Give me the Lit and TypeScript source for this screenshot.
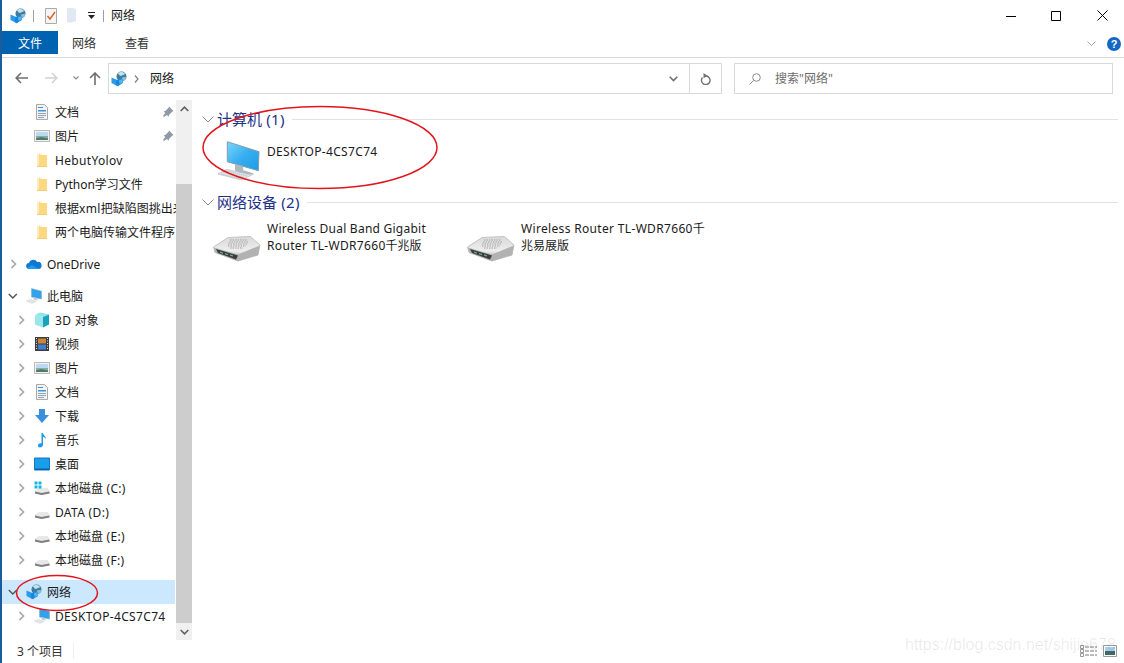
import { LitElement, html, css, svg } from "lit";
import { customElement } from "lit/decorators.js";

/* Wraps runs of Latin text so only they get the slightly wider tracking of the reference's font. */
const txt = (s: string) =>
  s.split(/([\u2E80-\u9FFF]+)/).map((p) => (/^[\u2E80-\u9FFF]+$/.test(p) || !p ? p : html`<span class="lat">${p}</span>`));

const netIcon = (s = 16) => html`<svg width=${s} height=${s} viewBox="0 0 16 16">
  <circle cx="10.500" cy="5.500" r="5" fill="#3c7d9f"/>
  <path d="M7 2.500c1.500-2 5.500-2 7 .5-1 .5-1.500 1.500-3 1.200-1 1.500-2.500.5-4-1.700z" fill="#c4e0ec"/>
  <path d="M11 6.500c1.500-.5 3-.5 4.300-.5-.3 2-1.800 3.700-3.800 4.200z" fill="#8fbdd2"/>
  <path d="M.5 6.500l7 3v5.500l-1 .3-6-3.300z" fill="#2a9bea"/>
  <path d="M5 9.500l5.500-2.200 1 1 .5 3.700-5 3-2-1z" fill="#1b86d8"/>
  <path d="M8 9l3.500-.8.500 3.300-3.500 1.500z" fill="#53b4f2"/>
</svg>`;

const docIcon = () => html`<svg width="16" height="16" viewBox="0 0 16 16">
  <path d="M2.500.5h8l3 3v12h-11z" fill="#f3f3f3" stroke="#a9a9a9"/>
  <path d="M4 3h5v1H4zM4 6h8v1.500H4z" fill="#3e95d8"/><path d="M4 9.500h8M4 11.500h8M4 13.500h6" stroke="#8fa3b4"/>
</svg>`;

const picIcon = () => html`<svg width="16" height="16" viewBox="0 0 16 16">
  <path d="M.5 2.500h15v11H.5z" fill="#f2f2f2" stroke="#b9b9b9"/>
  <path d="M2 4h12v4H2z" fill="#bcd8f2"/><path d="M2 8h12v4H2z" fill="#86ad9f"/><path d="M2 10.500l5-1.500 7 1.500V12H2z" fill="#54776c"/>
</svg>`;

const folderIcon = () => html`<svg width="16" height="16" viewBox="0 0 16 16">
  <path d="M3 2.500h2v11.500H3z" fill="#fdeeb8"/><path d="M5 1.500l3 1.500h5v11.500H5z" fill="#fcd980"/><path d="M3 14h10v1H3z" fill="#f3cf7a"/>
</svg>`;

const pinIcon = () => html`<svg width="12" height="12" viewBox="0 0 12 12">
  <path d="M7 .5l4.500 4.500-1.300.7-3 3-.7 2-1.600-1.600L2 11 1 10l2.300-2.900L1.600 5.500l2-.7 3-3z" fill="#8e9aa5"/>
</svg>`;

const cloudIcon = () => html`<svg width="16" height="16" viewBox="0 0 16 16">
  <path d="M3.500 13a3 3 0 01-.6-6A4.500 4.500 0 0111.200 6a3.500 3.500 0 011.500 7z" fill="#0f78d4"/>
  <path d="M3.500 13a3 3 0 01-2-1.400L6 9l6 3.500 2-1.200a3 3 0 01-1.300 1.700z" fill="#1a9fe8"/>
</svg>`;

const pcIcon = () => html`<svg width="16" height="16" viewBox="0 0 16 16">
  <path d="M5.500 .5l10 2.700v7.800l-10-2z" fill="#31a3ec" stroke="#7fa6c0" stroke-width=".5"/>
  <path d="M8 9.300l3 .6v1.500l2.500.8-4.500 0-1.500-1z" fill="#c3ccd2"/>
  <path d="M0 13l4.500-1.800 6 2.300-4.500 2z" fill="#e2e5e8" stroke="#c4cace" stroke-width=".3"/>
</svg>`;

const cubeIcon = () => html`<svg width="16" height="16" viewBox="0 0 16 16">
  <path d="M6 .5l9 2-6 2.500L1 3z" fill="#8fe3ea"/><path d="M1 3l8 2v10.500l-8-3z" fill="#9be6ec"/><path d="M9 5l6-2.500v10l-6 3z" fill="#1aa3bd"/>
</svg>`;

const videoIcon = () => html`<svg width="16" height="16" viewBox="0 0 16 16">
  <path d="M1 1h14v14H1z" fill="#3d3d3d"/><path d="M4 2.500h8v5H4z" fill="#c9863f"/><path d="M4 8.500h8v5H4z" fill="#3c7fd0"/>
  <path d="M2 2.500h1M2 5h1M2 7.500h1M2 10h1M2 12.500h1M13 2.500h1M13 5h1M13 7.500h1M13 10h1M13 12.500h1" stroke="#ddd"/>
</svg>`;

const dlIcon = () => html`<svg width="16" height="16" viewBox="0 0 16 16">
  <path d="M5 1h6v6h4l-7 8-7-8h4z" fill="#3a8fdc"/>
</svg>`;

const musicIcon = () => html`<svg width="16" height="16" viewBox="0 0 16 16">
  <path d="M7.500 1h1.500c.3 2.500 3 3 3 6-1-1.500-2-2-3-2v7.500c0 1.800-1.500 3-3.200 3C4.500 15.500 4 14.500 4 13.500 4 12 5.800 11 7.500 11.500z" fill="#1e9be8"/>
</svg>`;

const deskIcon = () => html`<svg width="16" height="16" viewBox="0 0 16 16">
  <path d="M.5 2h15v12H.5z" fill="#199fe8" stroke="#1674c0"/><path d="M1 12.500h14V14H1z" fill="#0c5fa8"/>
</svg>`;

const driveIcon = (win = false) => html`<svg width="16" height="16" viewBox="0 0 16 16">
  <path d="M1 10.500l4-2.500h8.500l2 2.500v3l-8 1.500-6.500-1.500z" fill="#e8e8e8"/>
  <path d="M1 11.500l6.500 1.500 8-1.500v2l-8 1.500-6.500-1.500z" fill="#7d7d7d"/>
  ${win ? svg`<path d="M.5 1.500h3v3h-3zM4.500 1.500h3v3h-3zM.5 5.500h3v3h-3zM4.500 5.500h3v3h-3z" fill="#14b4e8"/>` : ""}
</svg>`;

const bigPc = () => html`<svg class="bigicon" width="42" height="40" viewBox="0 0 42 40">
  <defs><linearGradient id="scr" x1="0" y1="0" x2="1" y2="1"><stop offset="0" stop-color="#7dd6fb"/><stop offset=".5" stop-color="#38aef0"/><stop offset="1" stop-color="#1b9ce6"/></linearGradient></defs>
  <path d="M9.300 .7L41 10.700l-.7 19L9.300 20.700z" fill="url(#scr)" stroke="#7f9db0"/>
  <path d="M17 23l8 2.300.3 4 10 3v1.500l-12-1.300-6.300-3z" fill="#aeb8bf"/>
  <path d="M-.3 33l9-4.700 25 5.700-10 5z" fill="#dfe3e6" stroke="#b4babf" stroke-width=".6"/>
  <path d="M5 31l21 5.500M8 30l21 5M3 33l19 5" stroke="#b5bbc0" stroke-width=".8" stroke-dasharray="1.500 .7"/>
</svg>`;

const router = () => html`<svg class="bigicon rt-ic" width="48" height="26" viewBox="0 0 48 26">
  <defs>
    <linearGradient id="rt" x1="0" y1="0" x2="0" y2="1"><stop offset="0" stop-color="#d9d9d9"/><stop offset=".6" stop-color="#eeeeee"/><stop offset="1" stop-color="#8f8f8f"/></linearGradient>
  </defs>
  <path d="M15 1.500L37.500.500 47 9l-2 10-20 6L2 16.500.5 11z" fill="url(#rt)" stroke="#c4c4c4" stroke-linejoin="round"/>
  <path d="M.8 11.500L25 18.500 46.800 9.500 45 19 25 25 2 16.500z" fill="#b2b2b2"/>
  <path d="M17 4h17M16 6h19M15 8h20M15 10h18M17 12h13" stroke="#a2a2a2" stroke-width="1.200" stroke-dasharray="1.500 1"/>
  <path d="M3 13l22 6.500-2 4L5 17z" fill="#3c3c3c"/>
  <path d="M7 15.500l3 .9v1.300l-3-.9zM12 17l3 .9v1.300l-3-.9zM17 18.400l3 .9v1.300l-3-.9z" fill="#6fae92"/>
</svg>`;

const chev = (dir: "r" | "d") =>
  dir === "r"
    ? html`<svg width="8" height="10" viewBox="0 0 8 10" fill="none" stroke="#a6a6a6" stroke-width="1.600"><path d="M1.500 1l4 4-4 4"/></svg>`
    : html`<svg class="down" width="10" height="7" viewBox="0 0 10 7" fill="none" stroke="#555" stroke-width="1.500"><path d="M.800 1l4 4 4-4"/></svg>`;

const groupChev = () =>
  html`<svg width="12" height="7" viewBox="0 0 12 7" fill="none" stroke="#8a8a8a"><path d="M.500.500L6 6 11.500.500"/></svg>`;

type Row = { label: string; icon: unknown; level: 0 | 1; arrow?: "r" | "d"; pin?: boolean; sel?: boolean; gap?: boolean; plain?: boolean };

const rows: Row[] = [
  { label: "文档", icon: docIcon(), level: 1, pin: true },
  { label: "图片", icon: picIcon(), level: 1, pin: true },
  { label: "HebutYolov", icon: folderIcon(), level: 1 },
  { label: "Python学习文件", icon: folderIcon(), level: 1, plain: true },
  { label: "根据xml把缺陷图挑出来", icon: folderIcon(), level: 1 },
  { label: "两个电脑传输文件程序", icon: folderIcon(), level: 1 },
  { label: "OneDrive", icon: cloudIcon(), level: 0, arrow: "r", gap: true, plain: true },
  { label: "此电脑", icon: pcIcon(), level: 0, arrow: "d", gap: true },
  { label: "3D 对象", icon: cubeIcon(), level: 1, arrow: "r" },
  { label: "视频", icon: videoIcon(), level: 1, arrow: "r" },
  { label: "图片", icon: picIcon(), level: 1, arrow: "r" },
  { label: "文档", icon: docIcon(), level: 1, arrow: "r" },
  { label: "下载", icon: dlIcon(), level: 1, arrow: "r" },
  { label: "音乐", icon: musicIcon(), level: 1, arrow: "r" },
  { label: "桌面", icon: deskIcon(), level: 1, arrow: "r" },
  { label: "本地磁盘 (C:)", icon: driveIcon(true), level: 1, arrow: "r" },
  { label: "DATA (D:)", icon: driveIcon(), level: 1, arrow: "r" },
  { label: "本地磁盘 (E:)", icon: driveIcon(), level: 1, arrow: "r" },
  { label: "本地磁盘 (F:)", icon: driveIcon(), level: 1, arrow: "r" },
  { label: "网络", icon: netIcon(), level: 0, arrow: "d", sel: true, gap: true },
  { label: "DESKTOP-4CS7C74", icon: pcIcon(), level: 1, arrow: "r" },
];

@customElement("app-root")
export class AppRoot extends LitElement {
  static styles = css`
    :host { display: block; position: relative; width: 1124px; height: 663px; overflow: hidden; background: #fff; color: #1a1a1a;
      font-family: "Noto Sans", "Noto Sans CJK SC", sans-serif; font-size: 12px; }
    .win { height: 663px; border-left: 2px solid #1c5c9c; box-sizing: border-box; display: flex; flex-direction: column; }
    svg { display: block; flex: none; }
    .lat { letter-spacing: .33px; }
    .tight .lat { letter-spacing: .25px; }
    .title { height: 31px; display: flex; align-items: center; padding-left: 8px; flex: none; }
    .vsep { width: 1px; height: 12px; background: #a0a0a0; }
    .title .name { margin: 0 0 2px 7px; }
    .controls { margin-left: auto; display: flex; align-items: center; padding-right: 16px; gap: 35px; }
    .controls .x { margin-left: 1px; }
    .tabs { height: 26px; flex: none; display: flex; align-items: flex-start; border-bottom: 1px solid #dadada; }
    .tab-file { width: 56px; height: 23px; background: #0063b1; color: #fff; display: flex; align-items: center; justify-content: center; }
    .tab { height: 23px; display: flex; align-items: center; color: #333; }
    .tab.first { margin-left: 14px; }
    .tab.second { margin-left: 29px; }
    .ribbon-right { margin-left: auto; display: flex; align-items: center; height: 26px; padding-right: 3px; gap: 11px; }
    .nav { height: 42px; flex: none; display: flex; align-items: flex-start; box-sizing: border-box; padding: 5px 9px 0 13px; }
    .nav > svg { margin-top: 9px; }
    .addr { margin-left: 7px; width: 614px; height: 31px; box-sizing: border-box; border: 1px solid #d9d9d9; display: flex; align-items: center; padding-left: 2px; }
    .addr .crumb { margin: 0 0 2px 11px; color: #1a1a1a; }
    .addr .gt { margin-left: 7px; }
    .addr .dd { margin-left: auto; width: 32px; display: flex; justify-content: center; }
    .addr .rf { width: 31px; height: 29px; border-left: 1px solid #d9d9d9; display: flex; align-items: center; justify-content: center; }
    .search { margin-left: 12px; width: 379px; height: 31px; box-sizing: border-box; border: 1px solid #d9d9d9; display: flex; align-items: center; padding-left: 14px; gap: 14px; color: #6d6d6d; }
    .search span { margin-bottom: 2px; }
    .main { flex: 1; min-height: 0; display: flex; }
    .tree { width: 174px; flex: none; overflow: hidden; }
    .row { height: 24px; display: flex; align-items: center; white-space: nowrap; position: relative; }
    .row.gap { margin-top: 8px; }
    .row.sel { background: #cce8ff; margin-right: 1px; }
    .row .ar { width: 8px; flex: none; }
    .row .ar .down { margin-left: -2px; }
    .row.l0 .ar { margin-left: 8px; }
    .row.l0 .ic { margin-left: 8px; }
    .row.l1 .ar { margin-left: 16px; }
    .row.l1 .ic { margin-left: 8px; }
    .row .lb { margin-left: 5px; }
    .row .pin { position: absolute; left: 160px; top: 6px; }
    .sb { width: 16px; flex: none; background: #f0f0f0; display: flex; flex-direction: column; }
    .sb .btn { height: 17px; display: flex; align-items: center; justify-content: center; flex: none; }
    .sb .gutter { flex: none; height: 67px; }
    .sb .thumb { flex: 1; background: #cdcdcd; }
    .content { flex: 1; padding: 8px 6px 0 10px; min-width: 0; }
    .ghead { height: 22px; display: flex; align-items: center; color: #1e3287; font-size: 15px; }
    .ghead .c { margin-right: 3px; width: 12px; }
    .ghead .gt { margin-bottom: 2px; }
    .ghead .line { flex: 1; height: 1px; background: #e2e2e2; margin-left: 7px; }
    .items { display: flex; }
    .items.pc { margin-bottom: 19px; }
    .items.rt { padding-top: 2px; }
    .item { display: flex; align-items: flex-start; height: 42px; padding-left: 16px; gap: 7px; }
    .item .txt { align-self: center; white-space: nowrap; }
    .bigicon { margin-top: 11px; }
    .rt .item { height: 43px; width: 254px; box-sizing: border-box; padding-left: 11px; gap: 6px; line-height: 17px; }
    .rt .rt-ic { margin-top: 21px; }
    .rt .txt { width: 186px; }
    .status { height: 23px; flex: none; box-sizing: border-box; padding: 0 0 1px 15px; display: flex; align-items: center; color: #333; position: relative; }
    .status .bar { position: absolute; left: 71px; top: 3px; width: 1px; height: 16px; background: #eee; }
    .views { margin-left: auto; display: flex; gap: 6px; padding-right: 7px; align-items: center; }
    .wm { position: absolute; left: 905px; top: 636px; font: 16px "Liberation Sans", sans-serif; color: rgba(0,0,0,.09); white-space: nowrap; pointer-events: none; }
    .ink { position: absolute; left: 0; top: 0; pointer-events: none; }
  `;

  render() {
    return html`
      <div class="win">
        <div class="title">
          ${netIcon()}
          <div class="vsep" style="margin-left:7px"></div>
          <svg style="margin-left:10px" width="14" height="16" viewBox="0 0 14 16"><path d="M1.500.5h11v15h-11z" fill="#f5f5f5" stroke="#aaa"/><path d="M3.500 8l2.500 3 5-7" fill="none" stroke="#e0622a" stroke-width="1.500"/></svg>
          <svg style="margin-left:8px" width="12" height="16" viewBox="0 0 12 16"><path d="M1 0h6l3 1v12l-6 2-3-1z" fill="#dfe8f3"/></svg>
          <svg style="margin-left:9px" width="9" height="8" viewBox="0 0 9 8"><path d="M1 0h7v1H1z" fill="#222"/><path d="M1 3h7L4.500 7z" fill="#222"/></svg>
          <div class="vsep" style="margin-left:7px"></div>
          <span class="name">网络</span>
          <div class="controls">
            <svg width="10" height="10" viewBox="0 0 10 10"><path d="M0 5.500h10" stroke="#000"/></svg>
            <svg width="10" height="10" viewBox="0 0 10 10"><path d="M.5.500h9v9h-9z" fill="none" stroke="#000"/></svg>
            <svg class="x" width="11" height="11" viewBox="0 0 11 11"><path d="M.5.500l10 10M10.500.500l-10 10" stroke="#000"/></svg>
          </div>
        </div>
        <div class="tabs">
          <div class="tab-file">文件</div>
          <div class="tab first">网络</div>
          <div class="tab second">查看</div>
          <div class="ribbon-right">
            <svg width="9" height="6" viewBox="0 0 9 6"><path d="M.500.500l4 4 4-4" fill="none" stroke="#a8a8a8"/></svg>
            <svg width="14" height="14" viewBox="0 0 14 14"><circle cx="7" cy="7" r="7" fill="#1268c3"/><text x="7" y="11" text-anchor="middle" font-size="11" font-weight="700" fill="#fff" font-family="Liberation Sans">?</text></svg>
          </div>
        </div>
        <div class="nav">
          <svg width="13" height="12" viewBox="0 0 13 12"><path d="M6 1L1.200 6 6 11M1.500 6H13" fill="none" stroke="#6f6f6f" stroke-width="1.600"/></svg>
          <svg style="margin-left:17px" width="13" height="12" viewBox="0 0 13 12"><path d="M7 1l4.800 5L7 11M11.500 6H0" fill="none" stroke="#d2d2d2" stroke-width="1.600"/></svg>
          <svg style="margin-left:15px;margin-top:13px" width="6" height="4" viewBox="0 0 6 4"><path d="M.5.500L3 3 5.500.500" fill="none" stroke="#8a8a8a" stroke-width="1.200"/></svg>
          <svg style="margin-left:10px" width="12" height="13" viewBox="0 0 12 13"><path d="M1 6l5-5 5 5M6 1v12" fill="none" stroke="#6f6f6f" stroke-width="1.600"/></svg>
          <div class="addr">
            ${netIcon()}
            <svg class="gt" width="5" height="8" viewBox="0 0 5 8"><path d="M1 .500l3 3.500-3 3.500" fill="none" stroke="#7f7f7f" stroke-width="1.200"/></svg>
            <span class="crumb">网络</span>
            <div class="dd"><svg width="9" height="6" viewBox="0 0 9 6"><path d="M.700.700l3.800 3.800L8.300.700" fill="none" stroke="#707070" stroke-width="1.600"/></svg></div>
            <div class="rf"><svg width="11" height="12" viewBox="0 0 11 12"><path d="M6 2.500A4.300 4.300 0 1 1 2.500 4" fill="none" stroke="#707070" stroke-width="1.400" transform="translate(0 .5)"/><path d="M3.500 0l4 2.800-4 2.400z" fill="#707070"/></svg></div>
          </div>
          <div class="search">
            <svg width="12" height="12" viewBox="0 0 12 12"><circle cx="7.500" cy="4.500" r="3.800" fill="none" stroke="#8a8a8a"/><path d="M4.700 7.300L.5 11.500" stroke="#8a8a8a"/></svg>
            <span>搜索"网络"</span>
          </div>
        </div>
        <div class="main">
          <div class="tree">
            ${rows.map((r) => html`
              <div class="row l${r.level} ${r.sel ? "sel" : ""} ${r.gap ? "gap" : ""}">
                <span class="ar">${r.arrow ? chev(r.arrow) : ""}</span>
                <span class="ic">${r.icon}</span>
                <span class="lb">${r.plain ? r.label : txt(r.label)}</span>
                ${r.pin ? html`<span class="pin">${pinIcon()}</span>` : ""}
              </div>`)}
          </div>
          <div class="sb">
            <div class="btn"><svg width="9" height="6" viewBox="0 0 9 6"><path d="M.700 5L4.500 1.200 8.300 5" fill="none" stroke="#606060" stroke-width="1.600"/></svg></div>
            <div class="gutter"></div>
            <div class="thumb"></div>
            <div class="btn"><svg width="9" height="6" viewBox="0 0 9 6"><path d="M.700 1l3.800 3.800L8.300 1" fill="none" stroke="#606060" stroke-width="1.600"/></svg></div>
          </div>
          <div class="content">
            <div class="ghead"><span class="c">${groupChev()}</span><span class="gt">${txt("计算机 (1)")}</span><span class="line"></span></div>
            <div class="items pc">
              <div class="item">${bigPc()}<span class="txt">${txt("DESKTOP-4CS7C74")}</span></div>
            </div>
            <div class="ghead"><span class="c">${groupChev()}</span><span class="gt">${txt("网络设备 (2)")}</span><span class="line"></span></div>
            <div class="items rt">
              <div class="item">${router()}<div class="txt"><div class="tight">${txt("Wireless Dual Band Gigabit")}</div><div>${txt("Router TL-WDR7660千兆版")}</div></div></div>
              <div class="item">${router()}<div class="txt"><div>${txt("Wireless Router TL-WDR7660千")}</div><div>兆易展版</div></div></div>
            </div>
          </div>
        </div>
        <div class="status">
          3 个项目<span class="bar"></span>
          <div class="views">
            <svg width="17" height="12" viewBox="0 0 17 12"><path d="M.5.500h3v3h-3zM.5 4.500h3v3h-3zM.5 8.500h3v3h-3z" fill="#fff" stroke="#999"/><path d="M5 2h12M5 6h12M5 10h12" stroke="#777" stroke-dasharray="4 1"/></svg>
            <svg width="14" height="12" viewBox="0 0 14 12"><path d="M.5.500h13v11H.5z" fill="#fff" stroke="#999"/><path d="M2 2h10v4H2z" fill="#a9cdf0"/><path d="M2 6h10v4H2z" fill="#3d6b5e"/></svg>
          </div>
        </div>
      </div>
      <div class="wm">https://blog.csdn.net/shijie678</div>
      <svg class="ink" width="1124" height="663" viewBox="0 0 1124 663" fill="none" stroke="#e3141c" stroke-width="1.500">
        <ellipse cx="320" cy="147.500" rx="117" ry="41"/>
        <ellipse cx="57" cy="593" rx="40.500" ry="17.500"/>
      </svg>
    `;
  }
}
